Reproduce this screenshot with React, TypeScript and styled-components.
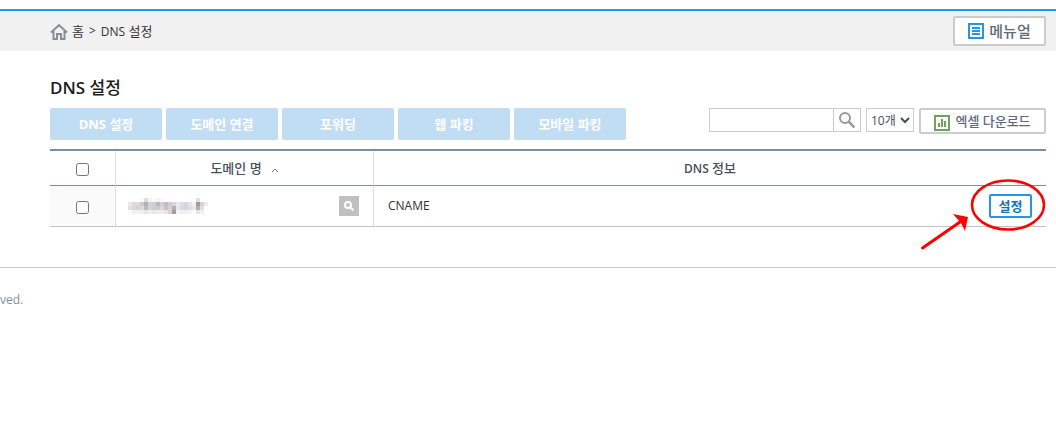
import React from 'react';
import styled, { createGlobalStyle } from 'styled-components';

const GlobalStyle = createGlobalStyle`
  * { box-sizing: border-box; }
  body {
    margin: 0;
    background: #fff;
    color: #333;
    font: 12px/16px "Open Sans", "Noto Sans CJK KR", sans-serif;
  }
  button, input, select { font: inherit; margin: 0; }
  button { cursor: pointer; }
`;

const TopBar = styled.header`
  display: flex;
  align-items: center;
  justify-content: space-between;
  height: 42px;
  margin-top: 9px;
  padding: 0 10px 0 50px;
  border-top: 2px solid #2595e8;
  background: #f1f1f1;
`;

const Breadcrumb = styled.nav`
  display: flex;
  align-items: center;
  gap: 5px;
  font-size: 13px;
  a { display: flex; align-items: center; gap: 4px; color: #333; text-decoration: none; }
  span { font-size: 12px; }
`;

const OutlineButton = styled.button<{ $large?: boolean }>`
  display: flex;
  align-items: center;
  justify-content: center;
  gap: 5px;
  width: ${p => (p.$large ? 93 : 127)}px;
  height: ${p => (p.$large ? 30 : 26)}px;
  padding: 0;
  border: 2px solid #ccc;
  border-radius: 2px;
  background: #fff;
  color: #5c6b7b;
  font-size: ${p => (p.$large ? 15 : 13)}px;
  font-weight: 500;
`;

const Main = styled.main`
  padding: 26px 10px 40px 50px;
`;

const Title = styled.h1`
  margin: 0 0 9px;
  color: #1a1a1a;
  font-size: 17px;
  line-height: 22px;
  font-weight: 500;
  strong { font-weight: 600; }
`;

const Toolbar = styled.div`
  display: flex;
  align-items: flex-start;
  justify-content: space-between;
  margin-bottom: 9px;
`;

const Group = styled.div<{ $gap: number }>`
  display: flex;
  gap: ${p => p.$gap}px;
`;

const ActionButton = styled.button`
  width: 112px;
  height: 32px;
  padding: 0;
  border: 0;
  border-radius: 2px;
  background: #c1ddf4;
  color: #fff;
  font-size: 13px;
  font-weight: 700;
`;

const SearchForm = styled.form`
  display: flex;
  width: 152px;
  height: 24px;
  border: 1px solid #ccc;
`;

const SearchInput = styled.input`
  flex: 1;
  min-width: 0;
  padding: 0 6px;
  border: 0;
`;

const SearchButton = styled.button`
  display: flex;
  align-items: center;
  justify-content: center;
  width: 27px;
  padding: 0;
  border: 0;
  border-left: 1px solid #ccc;
  background: #fff;
`;

const PageSize = styled.select`
  width: 48px;
  height: 24px;
  padding: 0;
  border: 1px solid #ccc;
  background: #fff;
  color: #444f5c;
`;

const Table = styled.table`
  width: 100%;
  table-layout: fixed;
  border-collapse: separate;
  border-spacing: 0;
  border-top: 2px solid #7b8fa3;
`;

const HeadCell = styled.th<{ $width?: number }>`
  width: ${p => (p.$width ? `${p.$width}px` : 'auto')};
  height: 35px;
  padding: 0;
  border-bottom: 1px solid #7b8fa3;
  border-right: ${p => (p.$width ? '1px solid #e0e0e0' : '0')};
  color: #444f5c;
  font-size: 13px;
  font-weight: 500;
  strong { font-size: 12px; font-weight: 600; }
`;

const Cell = styled.td<{ $divided?: boolean; $tinted?: boolean }>`
  height: 41px;
  padding: 0 14px 0 ${p => (p.$divided ? 12 : 14)}px;
  border-bottom: 1px solid #c4c4c4;
  border-right: ${p => (p.$divided ? '1px solid #e0e0e0' : '0')};
  background: ${p => (p.$tinted ? '#fafafa' : '#fff')};
`;

const CheckCell = styled(Cell)`
  padding: 0;
`;

const Spread = styled.div`
  display: flex;
  align-items: center;
  justify-content: space-between;
`;

const SortButton = styled.button`
  display: inline-flex;
  align-items: center;
  gap: 9px;
  padding: 0;
  border: 0;
  background: none;
  color: inherit;
  svg { margin-top: 3px; }
`;

const Check = styled.input`
  display: block;
  width: 13px;
  height: 13px;
  && { margin: 3px auto 0; }
`;

const LookupButton = styled.button`
  display: flex;
  align-items: center;
  justify-content: center;
  width: 20px;
  height: 20px;
  padding: 0;
  border: 0;
  background: #c0c0c0;
`;

const SettingsSlot = styled.div`
  position: relative;
`;

const SettingsButton = styled.button`
  display: block;
  width: 43px;
  height: 24px;
  padding: 0;
  border: 2px solid #2595e8;
  border-radius: 2px;
  background: #fff;
  color: #0f73bd;
  font-size: 13px;
  line-height: 16px;
  font-weight: 600;
`;

const Callout = styled.svg`
  position: absolute;
  top: -16px;
  right: -16px;
  pointer-events: none;
`;

const Footer = styled.footer`
  padding: 24px 0;
  border-top: 1px solid #c8c8c8;
  color: #7b8fa3;
`;

const mosaicRows = [
  ['#fff', '#fff', '#fff', '#fafafa', '#e0dedd', '#f4f4f4', '#fafafa', '#f2f2f2', '#fafafa', '#fff', '#fff', '#fff', '#fff', '#fff', '#fff', '#fff', '#fff', '#e2e0de', '#fff', '#fff'],
  ['#eee8e6', '#dcdadc', '#e0dcde', '#cccace', '#b4b0b0', '#d2d2d2', '#cccdd0', '#bcb8ba', '#d0ccd4', '#bebabe', '#d2ccd0', '#d4d8dc', '#dceefa', '#dedcde', '#d8d5d5', '#e2e4e8', '#f4f0ee', '#a29a96', '#d6d2d4', '#e8f0f6'],
  ['#e4dedc', '#e0d6d0', '#ccd4dc', '#dedada', '#bcbabc', '#d6d2d6', '#cccfd4', '#cecacc', '#d4d8dc', '#c6c2c4', '#decec6', '#b0b0ba', '#d8ecfa', '#e0d8d4', '#d4d6da', '#dce2e8', '#eee6e2', '#b6b0ac', '#e0e0e0', '#fff'],
  ['#fafafa', '#eeeef0', '#f2f2f2', '#f0eeee', '#e6e6e8', '#eeeeee', '#e8e8ec', '#eeeeee', '#ececee', '#e8e4e4', '#dcd4d0', '#a89c98', '#eef6fc', '#f2eeee', '#eeeeee', '#f4f4f4', '#fafafa', '#e4e2e2', '#f2f2f2', '#fff'],
];

const MaskedName = () => (
  <svg width="80" height="16" viewBox="0 0 80 16" shapeRendering="crispEdges" aria-hidden="true">
    {mosaicRows.flatMap((row, y) =>
      row.map((fill, x) => <rect key={`${x}-${y}`} x={x * 4} y={y * 4} width="4" height="4" fill={fill} />),
    )}
  </svg>
);

const App = () => (
  <>
    <GlobalStyle />
    <TopBar>
      <Breadcrumb aria-label="위치">
        <a href="#home">
          <svg width="18" height="18" viewBox="0 0 18 18" fill="none" stroke="#858d95" strokeWidth="2">
            <path d="M1 10.500 9 3l8 7.500M3.500 9v8h3.500v-5h4v5h3.500V9" />
          </svg>
          홈
        </a>
        <span>&gt;</span>
        <div><span>DNS</span> 설정</div>
      </Breadcrumb>
      <OutlineButton $large type="button">
        <svg width="16" height="16" viewBox="0 0 16 16" fill="none" stroke="#2595e8" strokeWidth="2">
          <path d="M1 1h14v14H1zM4 5h8M4 8h8M4 11h8" />
        </svg>
        메뉴얼
      </OutlineButton>
    </TopBar>
    <Main>
      <Title><strong>DNS</strong> 설정</Title>
      <Toolbar>
        <Group $gap={4}>
          {['DNS 설정', '도메인 연결', '포워딩', '웹 파킹', '모바일 파킹'].map(label => (
            <ActionButton key={label} type="button">{label}</ActionButton>
          ))}
        </Group>
        <Group $gap={5}>
          <SearchForm onSubmit={e => e.preventDefault()}>
            <SearchInput type="text" aria-label="도메인 검색" />
            <SearchButton type="submit" aria-label="검색">
              <svg width="16" height="16" viewBox="0 0 16 16" fill="none" stroke="#999" strokeWidth="2">
                <circle cx="6" cy="6" r="5" />
                <path d="m9.500 9.500 6 6" strokeWidth="2.500" />
              </svg>
            </SearchButton>
          </SearchForm>
          <PageSize aria-label="표시 개수">
            <option>10개</option>
          </PageSize>
          <OutlineButton type="button">
            <svg width="16" height="20" viewBox="0 -4 16 20" fill="none" stroke="#6fa35c" strokeWidth="2">
              <path d="M1 1h14v14H1zM5 8v4M8 4v8M11 6v6" />
            </svg>
            엑셀 다운로드
          </OutlineButton>
        </Group>
      </Toolbar>
      <Table>
        <thead>
          <tr>
            <HeadCell $width={66}><Check type="checkbox" aria-label="전체 선택" /></HeadCell>
            <HeadCell $width={258}>
              <SortButton type="button">
                도메인 명
                <svg width="8" height="6" viewBox="0 0 8 6" fill="none" stroke="#777"><path d="m1 5 3-3 3 3" /></svg>
              </SortButton>
            </HeadCell>
            <HeadCell><strong>DNS</strong> 정보</HeadCell>
          </tr>
        </thead>
        <tbody>
          <tr>
            <CheckCell $divided $tinted><Check type="checkbox" aria-label="도메인 선택" /></CheckCell>
            <Cell $divided>
              <Spread>
                <MaskedName />
                <LookupButton type="button" aria-label="도메인 조회">
                  <svg width="10" height="10" viewBox="0 0 10 10" fill="none" stroke="#fff" strokeWidth="2">
                    <circle cx="4" cy="4" r="3" /><path d="m6 6 3.500 3.500" />
                  </svg>
                </LookupButton>
              </Spread>
            </Cell>
            <Cell>
              <Spread>
                CNAME
                <SettingsSlot>
                  <SettingsButton type="button">설정</SettingsButton>
                  <Callout width="130" height="74" viewBox="0 0 130 74" aria-hidden="true">
                    <ellipse cx="90" cy="27" rx="36" ry="24.500" fill="none" stroke="#f00" strokeWidth="2.600" />
                    <path d="M4.500 70 42 44" stroke="#f00" strokeWidth="3" strokeLinecap="round" />
                    <path d="m35 36 15 3-3 14-4-8z" fill="#f00" />
                  </Callout>
                </SettingsSlot>
              </Spread>
            </Cell>
          </tr>
        </tbody>
      </Table>
    </Main>
    <Footer>ved.</Footer>
  </>
);

export default App;
